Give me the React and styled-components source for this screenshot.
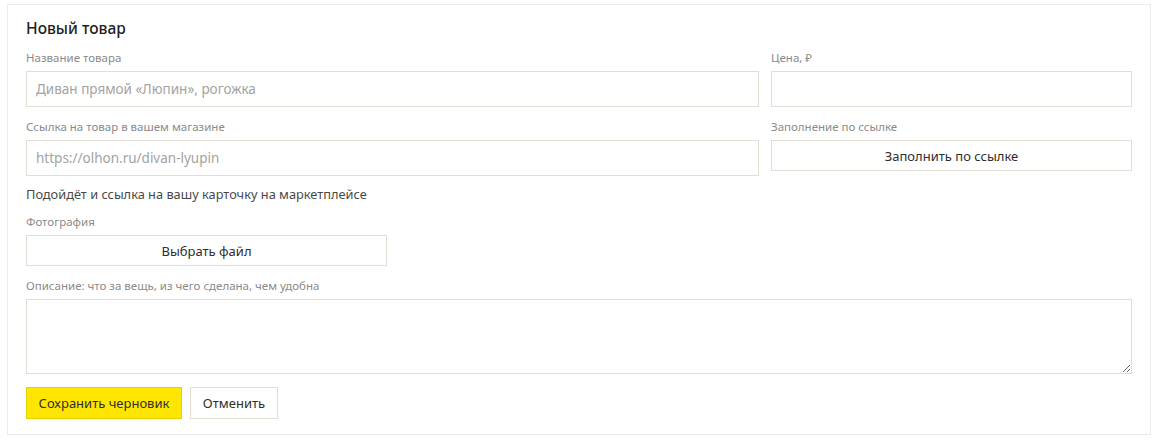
import React from "react";
import styled, { createGlobalStyle } from "styled-components";

const Global = createGlobalStyle`
  html, body { margin: 0; padding: 0; background: #fff; }
  body { font-family: "Noto Sans", "Open Sans", sans-serif; color: #222; }
  * { box-sizing: border-box; }
`;

const Page = styled.div`
  padding: 4px 9px 9px 7px;
`;

const Card = styled.form`
  display: flex;
  flex-direction: column;
  border: 1px solid #ecebe6;
  padding: 13px 18px 15px 18px;
`;

const Title = styled.h2`
  margin: 0 0 12px;
  font-size: 15.5px;
  line-height: 20px;
  font-weight: 500;
  color: #1e1e1e;
`;

const Grid = styled.div`
  display: grid;
  grid-template-columns: 1fr 361px;
  column-gap: 12px;
  row-gap: 12px;
`;

const Field = styled.label`
  display: flex;
  flex-direction: column;
  margin-top: ${(p) => p.$mt || 0}px;
`;

const Label = styled.span`
  font-size: 11.5px;
  line-height: 16px;
  color: #8a8a8a;
  margin-bottom: 5px;
`;

const Input = styled.input`
  height: 36px;
  border: 1px solid #e2ded4;
  padding: 0 9px;
  font-family: inherit;
  font-size: 13.5px;
  color: #333;
  outline: none;
  &::placeholder { color: #a3a3a3; }
`;

const TextArea = styled.textarea`
  height: 75px;
  border: 1px solid #e2ded4;
  padding: 8px 9px;
  font-family: inherit;
  font-size: 13.5px;
  outline: none;
`;

const Button = styled.button`
  height: ${(p) => p.$h || 31}px;
  width: ${(p) => (p.$w ? p.$w + "px" : "100%")};
  border: 1px solid ${(p) => (p.$primary ? "#e8d000" : "#e2ded4")};
  background: ${(p) => (p.$primary ? "#ffe600" : "#fff")};
  font-family: inherit;
  font-size: 13px;
  color: #2e2e2e;
  padding: 0;
  cursor: pointer;
`;

const Hint = styled.p`
  margin: 9px 0 0;
  font-size: 12.8px;
  line-height: 18px;
  color: #4a4a4a;
`;

const Actions = styled.div`
  display: flex;
  gap: 8px;
  margin-top: 13px;
`;

export default function App() {
  return (
    <Page>
      <Global />
      <Card onSubmit={(e) => e.preventDefault()}>
        <Title>Новый товар</Title>
        <Grid>
          <Field>
            <Label>Название товара</Label>
            <Input placeholder="Диван прямой «Люпин», рогожка" />
          </Field>
          <Field>
            <Label>Цена, ₽</Label>
            <Input />
          </Field>
          <Field>
            <Label>Ссылка на товар в вашем магазине</Label>
            <Input placeholder="https://olhon.ru/divan-lyupin" />
          </Field>
          <Field as="div">
            <Label>Заполнение по ссылке</Label>
            <Button type="button">Заполнить по ссылке</Button>
          </Field>
        </Grid>
        <Hint>Подойдёт и ссылка на вашу карточку на маркетплейсе</Hint>
        <Field as="div" $mt={11}>
          <Label>Фотография</Label>
          <Button type="button" $w={361}>Выбрать файл</Button>
        </Field>
        <Field $mt={12}>
          <Label>Описание: что за вещь, из чего сделана, чем удобна</Label>
          <TextArea />
        </Field>
        <Actions>
          <Button type="submit" $primary $w={156} $h={32}>Сохранить черновик</Button>
          <Button type="button" $w={88} $h={32}>Отменить</Button>
        </Actions>
      </Card>
    </Page>
  );
}
